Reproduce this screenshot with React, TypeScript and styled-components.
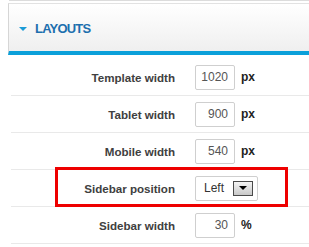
import React from "react";
import styled, { createGlobalStyle } from "styled-components";

const Global = createGlobalStyle`
  html, body { margin: 0; padding: 0; background: #fff; }
  body { font-family: "Liberation Sans", Arial, sans-serif; }
`;

const Page = styled.div`
  width: 309px;
  height: 247px;
  overflow: hidden;
  padding-left: 8px;
  box-sizing: border-box;
`;

const TopRule = styled.div`
  height: 1px;
  margin-left: 1px;
  background: #dcdcdc;
  margin-bottom: 2px;
`;

const Header = styled.div`
  height: 46px;
  border-top: 1px solid #e2e2e2;
  border-left: 1px solid #d6d6d6;
  border-bottom: 4px solid #0ba0da;
  background: linear-gradient(#ffffff, #efefef);
  display: flex;
  align-items: center;
  gap: 8px;
  padding-left: 10px;
  padding-top: 1px;
  box-sizing: content-box;
`;

const Caret = styled.span`
  width: 0;
  height: 0;
  border-left: 4px solid transparent;
  border-right: 4px solid transparent;
  border-top: 4px solid #1b9bd7;
  margin-top: 2px;
`;

const Title = styled.span`
  font-weight: bold;
  font-size: 13px;
  color: #1d6fae;
  letter-spacing: -0.8px;
`;

const Form = styled.div`
  margin-top: 4px;
  margin-left: 3px;
`;

const Row = styled.div`
  position: relative;
  height: 36px;
  border-bottom: 1px solid #e9e9e9;
  display: grid;
  grid-template-columns: 164px 1fr;
  column-gap: 20px;
  align-items: center;
`;

const Label = styled.span`
  text-align: right;
  font-weight: bold;
  font-size: 11.6px;
  color: #404040;
`;

const Field = styled.div`
  display: flex;
  align-items: center;
  gap: 6px;
`;

const NumInput = styled.div`
  width: 40px;
  height: 25px;
  box-sizing: border-box;
  border: 1px solid #cfcfcf;
  border-radius: 2px;
  display: flex;
  align-items: center;
  justify-content: flex-end;
  padding-right: 6px;
  font-size: 12px;
  color: #555;
`;

const Unit = styled.span`
  font-size: 12px;
  font-weight: bold;
  color: #222;
`;

const Select = styled.div`
  width: 63px;
  height: 25px;
  box-sizing: border-box;
  border: 1px solid #cfcfcf;
  border-radius: 2px;
  display: flex;
  align-items: center;
  justify-content: space-between;
  padding-left: 8px;
  padding-right: 4px;
  font-size: 12px;
  color: #333;
`;

const DropBtn = styled.span`
  width: 20px;
  height: 15px;
  box-sizing: border-box;
  border: 1px solid #4a4a4a;
  background: linear-gradient(#f4f4f4, #c8c8c8);
  display: flex;
  align-items: center;
  justify-content: center;
  &::after {
    content: "";
    width: 0;
    height: 0;
    border-left: 4px solid transparent;
    border-right: 4px solid transparent;
    border-top: 4px solid #000;
  }
`;

const Highlight = styled.div`
  position: absolute;
  left: 44px;
  top: -3px;
  width: 233px;
  height: 40px;
  box-sizing: border-box;
  border: 3px solid #ee0000;
  pointer-events: none;
`;

const rows: { label: string; value: string; unit: string }[] = [
  { label: "Template width", value: "1020", unit: "px" },
  { label: "Tablet width", value: "900", unit: "px" },
  { label: "Mobile width", value: "540", unit: "px" },
];

export default function App() {
  return (
    <Page>
      <Global />
      <TopRule />
      <Header>
        <Caret />
        <Title>LAYOUTS</Title>
      </Header>
      <Form>
        {rows.map((r) => (
          <Row key={r.label}>
            <Label>{r.label}</Label>
            <Field>
              <NumInput>{r.value}</NumInput>
              <Unit>{r.unit}</Unit>
            </Field>
          </Row>
        ))}
        <Row>
          <Label>Sidebar position</Label>
          <Field>
            <Select>
              Left
              <DropBtn />
            </Select>
          </Field>
          <Highlight />
        </Row>
        <Row>
          <Label>Sidebar width</Label>
          <Field>
            <NumInput>30</NumInput>
            <Unit>%</Unit>
          </Field>
        </Row>
      </Form>
    </Page>
  );
}
